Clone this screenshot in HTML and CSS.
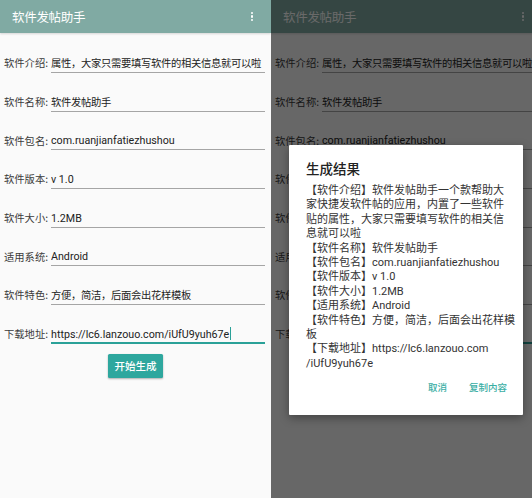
FILE: index.html
```html
<!DOCTYPE html>
<html>
<head>
<meta charset="utf-8">
<link rel="stylesheet" href="styles.css">
</head>
<body>
<div class="screen">
  <div class="phone">
    <div class="app">
      <div class="toolbar">
        <span class="title">软件发帖助手</span>
        <span class="menu"><i></i><i></i><i></i></span>
      </div>
      <div class="form">
        <div class="row"><span class="label">软件介绍:</span><span class="field cjk"><span class="val">属性，大家只需要填写软件的相关信息就可以啦</span></span></div>
        <div class="row"><span class="label">软件名称:</span><span class="field cjk"><span class="val">软件发帖助手</span></span></div>
        <div class="row"><span class="label">软件包名:</span><span class="field"><span class="val">com.ruanjianfatiezhushou</span></span></div>
        <div class="row"><span class="label">软件版本:</span><span class="field"><span class="val">v 1.0</span></span></div>
        <div class="row"><span class="label">软件大小:</span><span class="field"><span class="val">1.2MB</span></span></div>
        <div class="row"><span class="label">适用系统:</span><span class="field"><span class="val">Android</span></span></div>
        <div class="row"><span class="label">软件特色:</span><span class="field cjk"><span class="val">方便，简洁，后面会出花样模板</span></span></div>
        <div class="row"><span class="label">下载地址:</span><span class="field focused"><span class="val">https://lc6.lanzouo.com/iUfU9yuh67e<span class="cursor"></span></span></span></div>
        <div class="actions"><span class="btn">开始生成</span></div>
      </div>
    </div>
  </div>
  <div class="phone clip">
    <div class="app">
      <div class="toolbar">
        <span class="title">软件发帖助手</span>
        <span class="menu"><i></i><i></i><i></i></span>
      </div>
      <div class="form">
        <div class="row"><span class="label">软件介绍:</span><span class="field cjk"><span class="val">属性，大家只需要填写软件的相关信息就可以啦</span></span></div>
        <div class="row"><span class="label">软件名称:</span><span class="field cjk"><span class="val">软件发帖助手</span></span></div>
        <div class="row"><span class="label">软件包名:</span><span class="field"><span class="val">com.ruanjianfatiezhushou</span></span></div>
        <div class="row"><span class="label">软件版本:</span><span class="field"><span class="val">v 1.0</span></span></div>
        <div class="row"><span class="label">软件大小:</span><span class="field"><span class="val">1.2MB</span></span></div>
        <div class="row"><span class="label">适用系统:</span><span class="field"><span class="val">Android</span></span></div>
        <div class="row"><span class="label">软件特色:</span><span class="field cjk"><span class="val">方便，简洁，后面会出花样模板</span></span></div>
        <div class="row"><span class="label">下载地址:</span><span class="field focused"><span class="val">https://lc6.lanzouo.com/iUfU9yuh67e</span></span></div>
        <div class="actions"><span class="btn">开始生成</span></div>
      </div>
      <div class="overlay"></div>
      <div class="dialog">
        <div class="dtitle">生成结果</div>
        <div class="dbody">【软件介绍】软件发帖助手一个款帮助大<br>家快捷发软件帖的应用，内置了一些软件<br>贴的属性，大家只需要填写软件的相关信<br>息就可以啦<br>【软件名称】软件发帖助手<br>【软件包名】com.ruanjianfatiezhushou<br>【软件版本】v 1.0<br>【软件大小】1.2MB<br>【适用系统】Android<br>【软件特色】方便，简洁，后面会出花样模<br>板<br>【下载地址】https://lc6.lanzouo.com<br>/iUfU9yuh67e</div>
        <div class="dbuttons"><span class="dbtn">取消</span><span class="dbtn">复制内容</span></div>
      </div>
    </div>
  </div>
</div>
</body>
</html>
```
FILE: styles.css
```css
html, body {
  margin: 0;
  padding: 0;
  background: #fafafa;
}
body {
  width: 532px;
  height: 498px;
  overflow: hidden;
  font-family: Roboto, "Noto Sans CJK SC", sans-serif;
}
.screen {
  display: flex;
  width: 532px;
  height: 498px;
}
.phone {
  width: 271px;
  height: 498px;
  flex-shrink: 0;
  overflow: hidden;
  background: #fafafa;
}
.phone.clip {
  width: 261px;
}
.app {
  position: relative;
  width: 271px;
  height: 498px;
  background: #fafafa;
}
.toolbar {
  height: 33px;
  background: #80aaa3;
  display: flex;
  align-items: center;
  justify-content: space-between;
  padding: 0 18px 0 12px;
  box-shadow: 0 1px 2px rgba(0,0,0,0.15);
}
.title {
  color: #fff;
  font-size: 12.5px;
  font-family: "Noto Sans CJK SC", sans-serif;
  letter-spacing: -0.3px;
}
.menu {
  display: flex;
  flex-direction: column;
  gap: 1.6px;
}
.menu i {
  display: block;
  width: 2.2px;
  height: 2.2px;
  border-radius: 50%;
  background: #fff;
}
.form {
  display: flex;
  flex-direction: column;
  padding-top: 11px;
}
.row {
  height: 38.7px;
  display: flex;
  align-items: center;
  padding-left: 4px;
}
.label {
  width: 47px;
  flex-shrink: 0;
  font-size: 10.3px;
  color: #3a3a3a;
  font-family: "Noto Sans CJK SC", sans-serif;
  line-height: 14px;
  white-space: nowrap;
}
.field {
  width: 214px;
  overflow: hidden;
  white-space: nowrap;
  border-bottom: 1px solid #a5a5a5;
  padding: 1px 0 1px;
  margin-top: 2px;
  font-size: 10.7px;
  line-height: 14px;
  color: #222;
}
.field.cjk {
  font-size: 10.3px;
  letter-spacing: -0.3px;
}
.field.focused {
  border-bottom: 2px solid #2aa198;
  padding-bottom: 0;
}
.cursor {
  display: inline-block;
  width: 1px;
  height: 13px;
  background: #2aa198;
  vertical-align: -2px;
  margin-left: 1px;
}
.actions {
  display: flex;
  justify-content: center;
}
.btn {
  width: 55px;
  height: 24px;
  background: #2ea79e;
  color: #fff;
  font-size: 10.5px;
  font-family: "Noto Sans CJK SC", sans-serif;
  font-weight: 500;
  display: flex;
  align-items: center;
  justify-content: center;
  border-radius: 1.5px;
  box-shadow: 0 1px 2px rgba(0,0,0,0.3);
}
.overlay {
  position: absolute;
  inset: 0;
  background: rgba(0,0,0,0.59);
}
.dialog {
  position: absolute;
  left: 18px;
  top: 145px;
  width: 234px;
  height: 270px;
  box-sizing: border-box;
  background: #fff;
  border-radius: 1px;
  box-shadow: 0 3px 10px rgba(0,0,0,0.35);
  padding: 13px 0 0 17px;
  display: flex;
  flex-direction: column;
}
.dtitle {
  font-size: 13.5px;
  line-height: 20px;
  font-weight: 500;
  color: #222;
  font-family: "Noto Sans CJK SC", sans-serif;
}
.dbody {
  margin-top: 6px;
  font-size: 11px;
  line-height: 14.4px;
  color: #333;
  white-space: nowrap;
}
.dbuttons {
  margin-top: 9px;
  display: flex;
  justify-content: flex-end;
  gap: 22px;
  padding-right: 16px;
}
.dbtn {
  font-size: 9.5px;
  line-height: 14px;
  color: #3aaea4;
  font-family: "Noto Sans CJK SC", sans-serif;
  font-weight: 500;
}
```
